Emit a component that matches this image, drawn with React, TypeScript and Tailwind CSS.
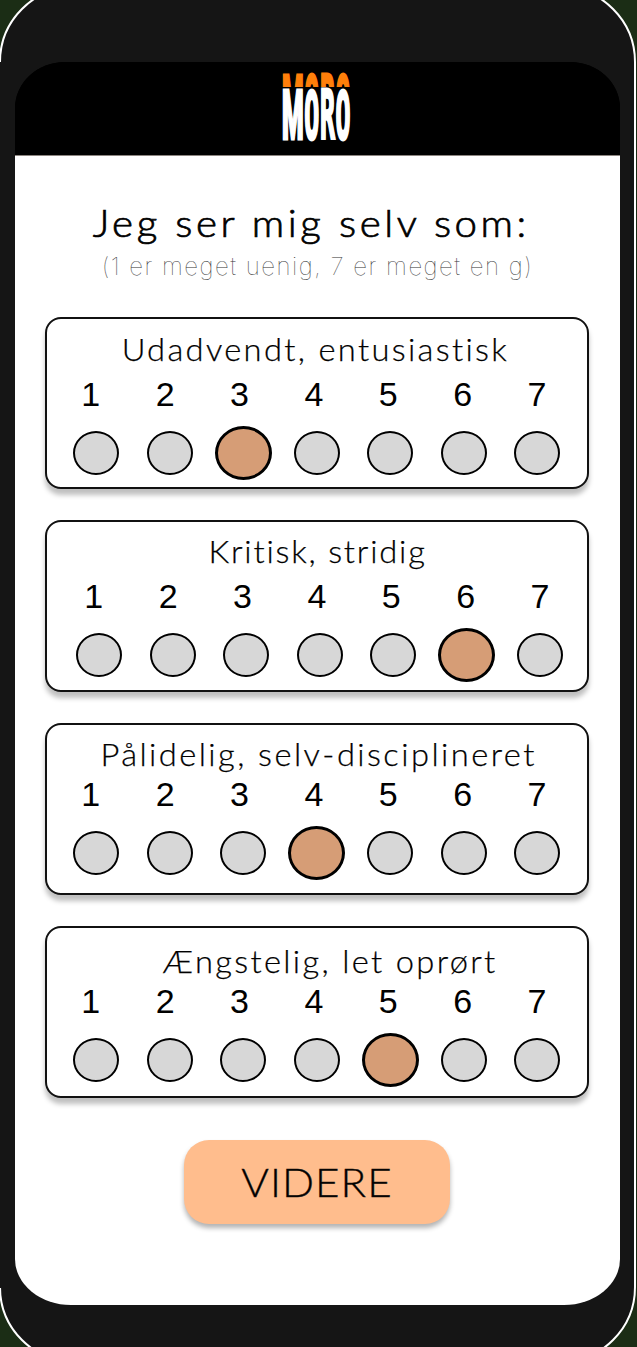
import React from "react";

type Question = {
  label: string;
  selected: number;
  labelClass: string;
  digitsClass: string;
  dotsClass: string;
};

const questions: Question[] = [
  { label: "Udadvendt, entusiastisk", selected: 3, labelClass: "mt-[10px] pr-[3px] tracking-[2.2px]", digitsClass: "mt-[5px]", dotsClass: "mt-[12px]" },
  { label: "Kritisk, stridig", selected: 6, labelClass: "mt-[9px] pl-[1px] tracking-[1.7px]", digitsClass: "mt-[5px] pl-[3px]", dotsClass: "mt-[12px] pl-[3px]" },
  { label: "Pålidelig, selv-disciplineret", selected: 4, labelClass: "mt-[9px] pl-[3px] tracking-[2.3px]", digitsClass: "mt-[0px]", dotsClass: "mt-[12px]" },
  { label: "Ængstelig, let oprørt", selected: 5, labelClass: "mt-[13px] pl-[25px] tracking-[2.2px]", digitsClass: "mt-[0px]", dotsClass: "mt-[12px]" },
];

const scale = [1, 2, 3, 4, 5, 6, 7];

const letters = [
  { char: "M", x: 0.9, width: 21.6, size: 69, stroke: 3, dy: 0, font: "Roboto, sans-serif" },
  { char: "O", x: 23.3, width: 15, size: 65, stroke: 3, dy: -0.5, font: "DejaVu Sans Mono, monospace" },
  { char: "R", x: 38.9, width: 15, size: 67, stroke: 3, dy: 0, font: "DejaVu Sans Mono, monospace" },
  { char: "O", x: 54.6, width: 15, size: 65, stroke: 3, dy: -0.5, font: "DejaVu Sans Mono, monospace" },
];

function LogoWord({ y, color }: { y: number; color: string }) {
  return (
    <g fill={color} stroke={color} fontWeight="900">
      {letters.map((l) => (
        <text key={l.x} x={l.x} y={y + l.dy} fontFamily={l.font} fontSize={l.size} strokeWidth={l.stroke} textLength={l.width} lengthAdjust="spacingAndGlyphs">
          {l.char}
        </text>
      ))}
    </g>
  );
}

function Logo() {
  return (
    <svg width="70" height="70" viewBox="0 0 70 70" className="block">
      <LogoWord y={51.5} color="#ff7f0a" />
      <rect x="0" y="15" width="70" height="55" fill="#000" />
      <LogoWord y={67} color="#fff" />
    </svg>
  );
}

function Card({ q }: { q: Question }) {
  return (
    <section className="flex h-[172px] w-[544px] flex-col rounded-[16px] border-2 border-[#111] bg-white shadow-[0_6px_5px_rgba(0,0,0,0.25)]">
      <h2 className={`h-[40px] origin-center scale-x-[1.055] text-center font-['Lato',sans-serif] text-[31px] leading-[40px] font-light whitespace-nowrap [-webkit-text-stroke:0.25px_#000] ${q.labelClass}`}>{q.label}</h2>
      <div className={`ml-[7px] flex h-[40px] ${q.digitsClass}`}>
        {scale.map((n) => (
          <span key={n} className="w-[74.4px] shrink-0 text-center text-[34px] leading-[40px]">{n}</span>
        ))}
      </div>
      <div className={`ml-[13px] flex h-[54px] items-center ${q.dotsClass}`}>
        {scale.map((n) => (
          <span key={n} className="flex w-[73.5px] shrink-0 justify-center">
            <button
              aria-label={String(n)}
              className={
                n === q.selected
                  ? "h-[54px] w-[57px] rounded-[50%] border-[3px] border-black bg-[#d69d76]"
                  : "h-[44px] w-[46px] rounded-[50%] border-2 border-black bg-[#d7d7d7]"
              }
            />
          </span>
        ))}
      </div>
    </section>
  );
}

export default function App() {
  return (
    <div className="relative flex h-[1347px] w-[637px] items-start overflow-hidden bg-[#1b2d15] font-['Liberation_Sans',sans-serif] text-black">
      <div className="-mt-[14px] -ml-px h-[1377px] w-[637px] shrink-0 rounded-[76px] border-2 border-white bg-[#151515] pt-[74px] pl-[14px]">
        <main className="flex h-[1243px] w-[605px] flex-col items-center overflow-hidden rounded-t-[50px_46px] rounded-b-[56px_46px] bg-[linear-gradient(#000_0_80px,#fff_80px)]">
          <header className="flex h-[94px] w-full shrink-0 justify-center border-b border-[#8c8580] bg-black pt-[10px]">
            <div className="-ml-[3px]"><Logo /></div>
          </header>
          <h1 className="mt-[41px] h-[50px] -translate-x-[6px] scale-x-[1.06] font-['Lato',sans-serif] text-[38px] leading-[50px] font-light tracking-[3.35px] whitespace-nowrap [-webkit-text-stroke:0.7px_#000]">Jeg ser mig selv som:</h1>
          <p className="mt-[5px] h-[30px] font-['Inter',sans-serif] text-[24px] leading-[30px] font-thin tracking-[1.5px] whitespace-nowrap text-[#333]">(1 er meget uenig, 7 er meget en g)</p>
          <div className="mt-[35px] mr-[2px] flex flex-col gap-[31px]">
            {questions.map((q) => (
              <Card key={q.label} q={q} />
            ))}
          </div>
          <button className="mt-[42px] mr-[1px] h-[84px] w-[266px] rounded-[25px] bg-[#ffbd8d] font-['Lato',sans-serif] text-[39px] font-light tracking-[1px] shadow-[0_4px_5px_rgba(0,0,0,0.3)]">
            <span className="block scale-x-[1.08] [-webkit-text-stroke:0.4px_#1a120c]">VIDERE</span>
          </button>
        </main>
      </div>
      <div className="absolute top-[62px] left-0 h-[1226px] w-px bg-[#151515]" />
    </div>
  );
}
